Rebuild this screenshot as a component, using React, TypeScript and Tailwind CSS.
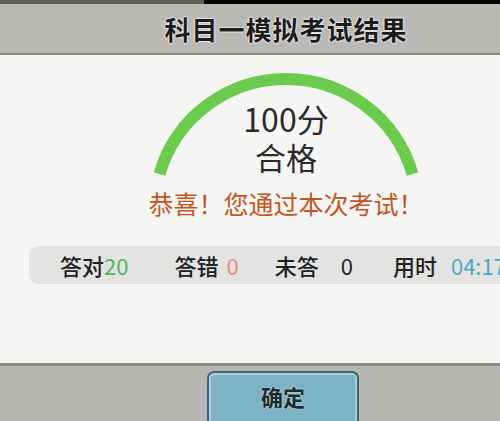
import React from 'react';

const stats = [
  { label: '答对', value: '20', color: 'text-[#4fb35f]', ml: 'ml-0', gap: 'ml-0' },
  { label: '答错', value: '0', color: 'text-[#e59078]', ml: 'ml-[46px]', gap: 'ml-[8px]' },
  { label: '未答', value: '0', color: 'text-[#222]', ml: 'ml-[36px]', gap: 'ml-[22px]' },
  { label: '用时', value: '04:17', color: 'text-[#4ea7c6]', ml: 'ml-[40px]', gap: 'ml-[14px]' },
];

function ScoreArc() {
  return (
    <svg className="absolute inset-0" width="276" height="112" viewBox="0 0 276 112">
      <path
        d="M 11.5 103 A 131.7 131.7 0 0 1 264.5 103"
        fill="none"
        stroke="#6bcb4c"
        strokeWidth="12"
      />
    </svg>
  );
}

export default function App() {
  return (
    <div className="w-[500px] h-[421px] overflow-hidden bg-[#b6b5b1] font-['Noto_Sans_CJK_SC',sans-serif]">
      <div className="w-[572px]">
        {/* status strip */}
        <div className="flex h-[4px]">
          <div className="w-[204px] bg-[#5e5e5e]" />
          <div className="flex-1 bg-black" />
        </div>

        {/* header */}
        <div className="h-[51px] bg-[#bab9b6] border-b-2 border-[#8a8a87] flex items-center justify-center">
          <span className="text-[26px] leading-none font-bold tracking-[1px] text-[#1c1c1c] [text-shadow:0_0_2px_#fff,0_0_2px_#fff,0_0_1px_#fff]">
            科目一模拟考试结果
          </span>
        </div>

        {/* body */}
        <div className="h-[308px] bg-[#f5f5f4] flex flex-col items-center pt-[16px]">
          <div className="relative w-[276px] h-[112px] flex flex-col items-center pt-[29px]">
            <ScoreArc />
            <span className="relative text-[32px] leading-[36px] text-[#2a2a2a]">100分</span>
            <span className="relative mt-[3px] text-[31px] leading-[36px] text-[#2a2a2a]">合格</span>
          </div>
          <div className="mt-[5px] text-[25px] leading-[30px] text-[#c4541f]">
            恭喜！您通过本次考试！
          </div>
          <div className="mt-[28px] self-stretch mx-[29px] h-[38px] rounded-[9px] bg-[#e3e3e2] flex items-center pl-[31px] text-[22px] leading-none">
            {stats.map((s) => (
              <div key={s.label} className={`flex items-center ${s.ml}`}>
                <span className="font-medium text-[#222]">{s.label}</span>
                <span className={`${s.gap} ${s.color}`}>{s.value}</span>
              </div>
            ))}
          </div>
        </div>

        {/* footer */}
        <div className="h-[3px] bg-[#8e8e8a]" />
        <div className="h-[53px] bg-[#b6b5b1] flex justify-center pt-[5px] pr-[6px]">
          <button className="w-[152px] h-[56px] rounded-[7px] border-2 border-[#3d6673] bg-[#7db3c5] shadow-[inset_0_0_0_2px_#a9d0dc] flex justify-center pt-[12px]">
            <span className="text-[22px] leading-none font-bold text-[#1e2a2e] [text-shadow:0_0_2px_#dfeff4]">
              确定
            </span>
          </button>
        </div>
      </div>
    </div>
  );
}
